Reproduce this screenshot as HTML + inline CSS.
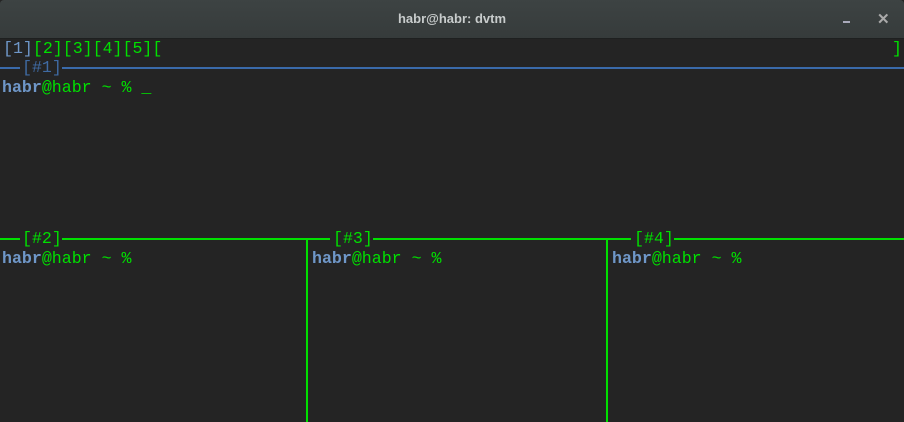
<!DOCTYPE html>
<html><head><meta charset="utf-8"><style>
*{margin:0;padding:0}
body{width:904px;height:422px;background:#242424;overflow:hidden;position:relative;font-family:"Liberation Mono",monospace;font-size:16.6px}
#tb{position:absolute;left:0;top:0;width:904px;height:38px;background:linear-gradient(#3d4343,#363b3b);border-bottom:1px solid #1e2020;border-radius:4px 4px 0 0}
#tb .t{position:absolute;left:0;right:0;top:11px;text-align:center;font:bold 13px "Liberation Sans",sans-serif;color:#c8cccc}
.min{position:absolute;left:843px;top:21px;width:7px;height:2px;background:#aab}
.x{position:absolute;left:877px;top:10px;font:bold 15px "Liberation Sans",sans-serif;color:#aaa}
.r{position:absolute;white-space:pre;line-height:19px;height:19px}
.g{color:#00e000}.b{color:#6f97c8}.bb{color:#6f97c8;font-weight:bold}
.h{position:absolute;height:2px}
.v{position:absolute;width:2px;background:#00e000}
</style></head><body>
<div id="tb"><div class="t">habr@habr: dvtm</div><div class="min"></div><div class="x">✕</div></div>
<div class="r" style="left:3px;top:39px"><span class="b">[1]</span><span class="g">[2][3][4][5][</span></div>
<div class="r g" style="left:892px;top:39px">]</div>
<div class="h" style="left:0;top:67px;width:20px;background:#3a6aaa"></div>
<div class="h" style="left:62px;top:67px;width:842px;background:#3a6aaa"></div>
<div class="r" style="left:22px;top:58px;color:#3f6aa2">[#1]</div>
<div class="r" style="left:2px;top:78px"><span class="bb">habr</span><span class="g">@habr ~ % _</span></div>
<!-- bottom borders -->
<div class="h" style="left:0;top:238px;width:20px;background:#00e000"></div>
<div class="r g" style="left:22px;top:229px">[#2]</div>
<div class="h" style="left:62px;top:238px;width:268px;background:#00e000"></div>
<div class="r g" style="left:333px;top:229px">[#3]</div>
<div class="h" style="left:373px;top:238px;width:258px;background:#00e000"></div>
<div class="r g" style="left:634px;top:229px">[#4]</div>
<div class="h" style="left:674px;top:238px;width:230px;background:#00e000"></div>
<div class="v" style="left:306px;top:238px;height:184px"></div>
<div class="v" style="left:606px;top:238px;height:184px"></div>
<div class="r" style="left:2px;top:249px"><span class="bb">habr</span><span class="g">@habr ~ %</span></div>
<div class="r" style="left:312px;top:249px"><span class="bb">habr</span><span class="g">@habr ~ %</span></div>
<div class="r" style="left:612px;top:249px"><span class="bb">habr</span><span class="g">@habr ~ %</span></div>
</body></html>
